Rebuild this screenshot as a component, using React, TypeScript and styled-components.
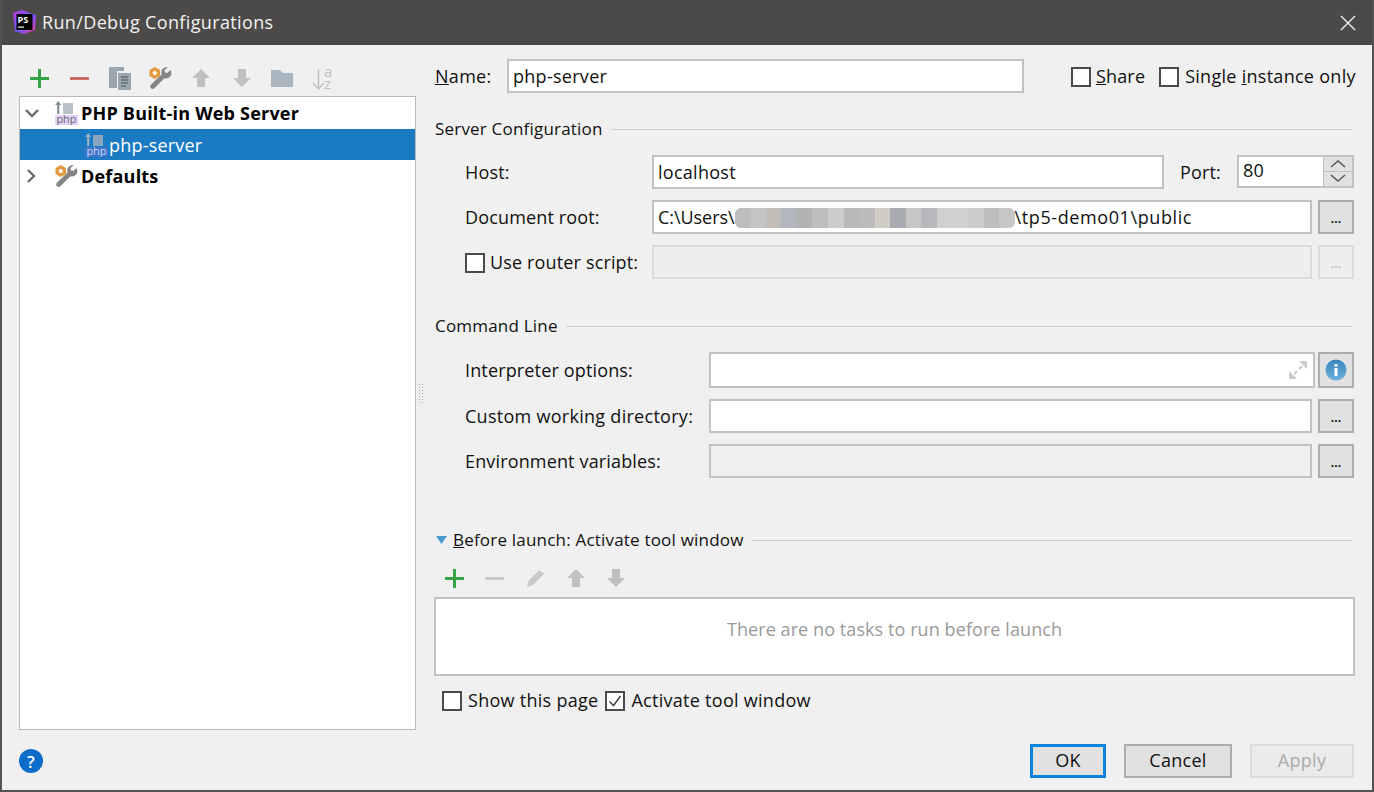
import styled, { createGlobalStyle } from 'styled-components'
import { ReactNode } from 'react'

const GlobalStyle = createGlobalStyle`
  html, body {
    margin: 0;
    padding: 0;
    background: #f0f0f0;
  }
  body {
    font-family: 'Open Sans', 'Noto Sans', sans-serif;
    font-size: 18px;
    letter-spacing: 0.28px;
    color: #111;
  }
  * { box-sizing: border-box; }
`

const Window = styled.div`
  width: 1374px;
  height: 792px;
  display: flex;
  flex-direction: column;
  background: #f0f0f0;
  border: 2px solid #555351;
  border-top: none;
  overflow: hidden;
`

const TitleBar = styled.div`
  height: 45px;
  flex: none;
  background: #4c4a48;
  margin: 0 -2px;
  padding: 0 2px 0 12px;
  display: flex;
  align-items: center;
  gap: 5px;
  color: #f2f2f2;
  font-size: 18px;
  letter-spacing: 0.36px;
`

const TitleText = styled.span`
  flex: 1;
  margin-top: -2px;
`

const CloseButton = styled.div`
  width: 18px;
  height: 18px;
  margin-right: 15px;
  display: flex;
`

const Body = styled.div`
  flex: 1;
  display: flex;
  padding-left: 17px;
  min-height: 0;
`

const LeftPane = styled.div`
  width: 397px;
  flex: none;
  display: flex;
  flex-direction: column;
  padding-top: 15px;
  height: 685px;
`

const Toolbar = styled.div`
  height: 36px;
  flex: none;
  display: flex;
  align-items: center;
`

const TasksToolbar = styled(Toolbar)`
  margin: 10px 0 0 -1px;
`

const IconSlot = styled.div`
  width: 40.5px;
  flex: none;
  display: flex;
  justify-content: center;
`

const Tree = styled.div`
  flex: 1;
  background: #fff;
  border: 1px solid #b9b9b9;
`

const TreeRow = styled.div<{ $selected?: boolean; $indent?: number; $h: number }>`
  height: ${(p) => p.$h}px;
  display: flex;
  align-items: center;
  padding-left: ${(p) => p.$indent ?? 0}px;
  background: ${(p) => (p.$selected ? '#1a7bc3' : 'transparent')};
  color: ${(p) => (p.$selected ? '#fff' : '#000')};
`

const TreeLabel = styled.span<{ $bold?: boolean }>`
  font-weight: ${(p) => (p.$bold ? 700 : 400)};
  margin-left: ${(p) => (p.$bold ? 3 : 1)}px;
  margin-top: ${(p) => (p.$bold ? -1 : 0)}px;
  letter-spacing: 0.2px;
`

const Arrow = styled.div`
  width: 24px;
  margin-right: 11px;
  display: flex;
  justify-content: center;
`

const Splitter = styled.div`
  width: 19px;
  flex: none;
  height: 685px;
  padding: 338px 0 0 1px;
  display: flex;
  flex-direction: column;
`

const Grip = styled.div`
  width: 6px;
  height: 22px;
  margin-left: 1px;
  background-image: radial-gradient(#a9a9a9 0.7px, transparent 0.9px);
  background-size: 3px 3px;
`

const RightPane = styled.div`
  width: 919px;
  flex: none;
  padding: 14px 0 0;
`

const Row = styled.div<{ $mt?: number; $pl?: number }>`
  display: flex;
  align-items: center;
  margin-top: ${(p) => p.$mt ?? 0}px;
  padding-left: ${(p) => p.$pl ?? 0}px;
`

const Label = styled.label<{ $w?: number; $ls?: number }>`
  width: ${(p) => (p.$w ? `${p.$w}px` : 'auto')};
  flex: none;
  display: flex;
  align-items: center;
  white-space: pre;
  letter-spacing: ${(p) => p.$ls ?? 0.15}px;
`

const Field = styled.div<{ $w?: number; $disabled?: boolean; $muted?: boolean; $h?: number }>`
  ${(p) => (p.$w ? `width: ${p.$w}px; flex: none;` : 'flex: 1;')}
  height: ${(p) => p.$h ?? 34}px;
  padding: 0 4px;
  background: ${(p) => (p.$disabled ? '#eeeeee' : p.$muted ? '#f0f0f0' : '#fff')};
  border: 2px solid ${(p) => (p.$disabled ? '#dcdcdc' : '#c2c2c2')};
  display: flex;
  align-items: center;
  white-space: nowrap;
  min-width: 0;
`

const PathPart = styled.span<{ $ls: number }>`
  letter-spacing: ${(p) => p.$ls}px;
`

const Spacer = styled.div<{ $w?: number }>`
  ${(p) => (p.$w ? `width: ${p.$w}px; flex: none;` : 'flex: 1;')}
`

const Expand = styled.div`
  margin-left: auto;
  margin-right: 2px;
  display: flex;
`

const SideButton = styled.div<{ $disabled?: boolean; $h?: number }>`
  width: 36px;
  height: ${(p) => p.$h ?? 34}px;
  flex: none;
  margin-left: 6px;
  background: ${(p) => (p.$disabled ? '#eeeeee' : '#e1e1e1')};
  border: 2px solid ${(p) => (p.$disabled ? '#dcdcdc' : '#adadad')};
  color: ${(p) => (p.$disabled ? '#bbb' : '#111')};
  display: flex;
  align-items: center;
  justify-content: center;
  font-weight: 700;
  font-size: 12px;
  letter-spacing: 0;
  padding-top: 3px;
`

const InfoButton = styled(SideButton)`
  margin-left: 3px;
  padding-top: 0;
`

const Header = styled.div<{ $mt: number }>`
  height: 20px;
  margin-top: ${(p) => p.$mt}px;
  display: flex;
  align-items: center;
  gap: 8px;
  font-size: 17px;
  letter-spacing: 0.2px;
  padding-right: 2px;
`

const HeaderText = styled.span`
  margin-top: -2px;
  white-space: pre;
`

const HeaderRule = styled.div`
  flex: 1;
  height: 1px;
  background: #cfcfcf;
`

const Triangle = styled.svg`
  margin: 0 -2px 0 1px;
`

const Box = styled.span<{ $mr?: number }>`
  width: 20px;
  height: 20px;
  flex: none;
  margin: 2px ${(p) => p.$mr ?? 5}px 0 0;
  background: #fff;
  border: 2px solid #4a4a4a;
  display: inline-flex;
  align-items: center;
  justify-content: center;
`

const Spinner = styled.div`
  width: 117px;
  height: 33px;
  flex: none;
  margin-top: -2px;
  background: #fff;
  border: 2px solid #c2c2c2;
  display: flex;
  padding-left: 4px;
  align-items: center;
`

const SpinText = styled.span`
  flex: 1;
  margin-top: -3px;
`

const SpinButtons = styled.div`
  width: 29px;
  height: 100%;
  display: flex;
  flex-direction: column;
  background: #e1e1e1;
  border-left: 1px solid #c2c2c2;
`

const SpinButton = styled.div<{ $top?: boolean }>`
  flex: 1;
  display: flex;
  align-items: center;
  justify-content: center;
  border-bottom: ${(p) => (p.$top ? '1px solid #c2c2c2' : 'none')};
`

const Blur = styled.div`
  display: flex;
  width: 280px;
  height: 20px;
  margin-top: 1px;
  border-radius: 6px;
  overflow: hidden;
  filter: blur(0.6px);
`

const BlurCell = styled.div<{ $c: string }>`
  flex: 1;
  background: ${(p) => p.$c};
`

const TaskBox = styled.div`
  height: 79px;
  margin: 1px -1px 0;
  padding-bottom: 15px;
  background: #fff;
  border: 2px solid #c2c2c2;
  display: flex;
  align-items: center;
  justify-content: center;
  color: #9a9a9a;
  letter-spacing: 0.08px;
`

const Footer = styled.div`
  flex: none;
  height: 60px;
  padding: 14px 18px 0 17px;
  display: flex;
  align-items: flex-start;
`

const HelpIcon = styled.div`
  width: 24px;
  height: 24px;
  margin-top: 5px;
  border-radius: 50%;
  background: #0b6cc9;
  color: #fff;
  font-size: 17px;
  font-weight: 600;
  display: flex;
  align-items: center;
  justify-content: center;
`

const DialogButton = styled.div<{ $w: number; $variant?: 'default' | 'disabled'; $ml: number }>`
  width: ${(p) => p.$w}px;
  height: 34px;
  margin-left: ${(p) => p.$ml}px;
  padding-bottom: 2px;
  display: flex;
  align-items: center;
  justify-content: center;
  background: ${(p) => (p.$variant === 'disabled' ? '#ebebeb' : '#e1e1e1')};
  border: ${(p) =>
    p.$variant === 'default'
      ? '3px solid #0a84e3'
      : p.$variant === 'disabled'
        ? '2px solid #dcdcdc'
        : '2px solid #adadad'};
  color: ${(p) => (p.$variant === 'disabled' ? '#aaa' : '#111')};
`

const SortSvg = styled.svg`
  overflow: visible;
`

const PsLogo = () => (
  <svg width="25" height="25" viewBox="0 0 25 25">
    <defs>
      <linearGradient id="psg" x1="0" y1="0" x2="1" y2="1">
        <stop offset="0" stopColor="#c03bd8" />
        <stop offset="0.55" stopColor="#6b57ff" />
        <stop offset="1" stopColor="#ff318c" />
      </linearGradient>
    </defs>
    <polygon points="1,3 10,0 24,5 23,20 12,24 3,21" fill="url(#psg)" />
    <rect x="4.5" y="4" width="16" height="16" fill="#000" />
    <text x="5.5" y="13" fontSize="9" fontWeight="700" fill="#fff" fontFamily="Open Sans" letterSpacing="0">PS</text>
    <rect x="6" y="16.5" width="6" height="1.2" fill="#fff" />
  </svg>
)

const Plus = () => (
  <svg width="19" height="19" viewBox="0 0 19 19">
    <path d="M0 9.5h19M9.5 0v19" stroke="#37a349" strokeWidth="3" />
  </svg>
)

const Minus = ({ color }: { color: string }) => (
  <svg width="19" height="19" viewBox="0 0 19 19">
    <path d="M0 9.5h19" stroke={color} strokeWidth="2.6" />
  </svg>
)

const Copy = () => (
  <svg width="22" height="23" viewBox="0 0 22 23">
    <path d="M0 0h15v4H8v17H0z" fill="#9aa7b0" />
    <rect x="9" y="6" width="13" height="17" fill="#9aa7b0" />
    <path d="M12 10h7M12 13h7M12 16h7M12 19h5" stroke="#4a5357" strokeWidth="1.2" />
  </svg>
)

const Wrench = () => (
  <svg width="23" height="23" viewBox="0 0 24 24">
    <path d="M22.5 3.2l-3.6 3-2.3-.7-.4-2.4 3.4-2.6c-3-.8-6.3 1-6.8 4.2-.2 1.1 0 2.2.3 3L2 18.6c-1 1-1 2.6 0 3.6s2.6 1 3.6 0l10.2-10.3c3.5.9 7-1.2 7.5-4.6.1-1.4-.2-3-.8-4.1z" fill="#858585" />
    <path d="M6 0l5.5 3v6.4L6 12.6.5 9.4V3z" fill="#e39a3e" />
    <circle cx="6" cy="6.3" r="2.2" fill="#fff" />
  </svg>
)

const UpArrow = () => (
  <svg width="18" height="18" viewBox="0 0 18 18">
    <path d="M9 0l9 9h-5v9H5V9H0z" fill="#c0c0c0" />
  </svg>
)

const DownArrow = () => (
  <svg width="18" height="18" viewBox="0 0 18 18">
    <path d="M5 0h8v9h5l-9 9-9-9h5z" fill="#c0c0c0" />
  </svg>
)

const Folder = () => (
  <svg width="22" height="17" viewBox="0 0 22 17">
    <path d="M0 0h9l3 3h10v14H0z" fill="#abb7c0" />
  </svg>
)

const SortAz = () => (
  <SortSvg width="21" height="26" viewBox="0 0 21 26">
    <path d="M6.5 4v20M1 18l5.5 6 5.5-6" fill="none" stroke="#c0c0c0" strokeWidth="1.5" />
    <text fontSize="15" fill="#c0c0c0" fontFamily="Open Sans" letterSpacing="0">
      <tspan x="12" y="11.5">a</tspan>
      <tspan x="12" y="24">z</tspan>
    </text>
  </SortSvg>
)

const Pencil = () => (
  <svg width="19" height="19" viewBox="0 0 20 20">
    <path d="M14 1l5 4L7 17l-6 2 2-7z" fill="#c8c8c8" />
  </svg>
)

const PhpIcon = ({ selected }: { selected?: boolean }) => (
  <svg width="23" height="24" viewBox="0 0 23 24">
    <path d="M3.2 0l3 4H4.3v9H2.2V4H.2z" fill={selected ? '#9fb5c6' : '#7e8e98'} />
    <rect x="8" y="2" width="10" height="11" fill={selected ? '#8aa5bd' : '#b6c1c9'} />
    <rect x="0" y="14" width="23" height="10" fill={selected ? '#3f73cc' : '#e3d2f7'} />
    <text
      x="11.5"
      y="22"
      fontSize="11"
      textAnchor="middle"
      fill={selected ? '#c9d8ee' : '#6b6b6b'}
      fontFamily="Open Sans"
      letterSpacing="0"
    >
      php
    </text>
  </svg>
)

const Chevron = ({ down }: { down?: boolean }) => (
  <svg width="16" height="16" viewBox="0 0 16 16">
    <path
      d={down ? 'M2 5l6 6 6-6' : 'M4 2l6 6-6 6'}
      fill="none"
      stroke="#6b6b6b"
      strokeWidth="2.4"
    />
  </svg>
)

const CheckBox = ({ checked, mr }: { checked?: boolean; mr?: number }) => (
  <Box $mr={mr}>
    {checked && (
      <svg width="14" height="14" viewBox="0 0 14 14">
        <path d="M1.5 7.5l4 4L12.5 2" fill="none" stroke="#444" strokeWidth="1.5" />
      </svg>
    )}
  </Box>
)

const SectionHeader = ({ mt, children }: { mt: number; children: ReactNode }) => (
  <Header $mt={mt}>
    {children}
    <HeaderRule />
  </Header>
)

const blurColors = [
  '#bdbdbd', '#c4c4c4', '#c3bdb8', '#b3b6bc', '#b2b2b2', '#bdbfbf', '#cdcdcd', '#b9b9b9',
  '#bcbcbc', '#d0ccc6', '#a8abb0', '#c6c6c4', '#b6b8bb', '#cfd1d1', '#d0d0d0', '#cdcdcd',
  '#bdbdbd', '#c6c6c6',
]

const leftTools = [
  <Plus />, <Minus color="#c9594e" />, <Copy />, <Wrench />,
  <UpArrow />, <DownArrow />, <Folder />, <SortAz />,
]

const taskTools = [<Plus />, <Minus color="#c6c6c6" />, <Pencil />, <UpArrow />, <DownArrow />]

export default function App() {
  return (
    <>
      <GlobalStyle />
      <Window>
        <TitleBar>
          <PsLogo />
          <TitleText>Run/Debug Configurations</TitleText>
          <CloseButton>
            <svg width="18" height="18" viewBox="0 0 18 18">
              <path d="M2 2l14 14M16 2L2 16" stroke="#f0f0f0" strokeWidth="1.4" />
            </svg>
          </CloseButton>
        </TitleBar>
        <Body>
          <LeftPane>
            <Toolbar>
              {leftTools.map((tool, i) => (
                <IconSlot key={i}>{tool}</IconSlot>
              ))}
            </Toolbar>
            <Tree>
              <TreeRow $h={32}>
                <Arrow>
                  <Chevron down />
                </Arrow>
                <PhpIcon />
                <TreeLabel $bold>PHP Built-in Web Server</TreeLabel>
              </TreeRow>
              <TreeRow $indent={65} $h={31} $selected>
                <PhpIcon selected />
                <TreeLabel>php-server</TreeLabel>
              </TreeRow>
              <TreeRow $h={32}>
                <Arrow>
                  <Chevron />
                </Arrow>
                <Wrench />
                <TreeLabel $bold>Defaults</TreeLabel>
              </TreeRow>
            </Tree>
          </LeftPane>
          <Splitter>
            <Grip />
          </Splitter>
          <RightPane>
            <Row>
              <Label $w={72} $ls={0.28}>
                <span>
                  <u>N</u>ame:
                </span>
              </Label>
              <Field $w={517}>php-server</Field>
              <Spacer $w={47} />
              <CheckBox />
              <Label>
                <span>
                  <u>S</u>hare
                </span>
              </Label>
              <Spacer $w={14} />
              <CheckBox mr={6} />
              <Label $ls={0.28}>
                <span>
                  Single <u>i</u>nstance only
                </span>
              </Label>
            </Row>

            <SectionHeader mt={26}>
              <HeaderText>Server Configuration</HeaderText>
            </SectionHeader>
            <Row $mt={16} $pl={30}>
              <Label $w={187}>Host:</Label>
              <Field $w={512}>localhost</Field>
              <Spacer $w={16} />
              <Label $w={57}>Port:</Label>
              <Spinner>
                <SpinText>80</SpinText>
                <SpinButtons>
                  <SpinButton $top>
                    <svg width="16" height="9" viewBox="0 0 16 9">
                      <path d="M1 8l7-6 7 6" fill="none" stroke="#555" strokeWidth="1.5" />
                    </svg>
                  </SpinButton>
                  <SpinButton>
                    <svg width="16" height="9" viewBox="0 0 16 9">
                      <path d="M1 1l7 6 7-6" fill="none" stroke="#555" strokeWidth="1.5" />
                    </svg>
                  </SpinButton>
                </SpinButtons>
              </Spinner>
            </Row>
            <Row $mt={11} $pl={30}>
              <Label $w={187}>Document root:</Label>
              <Field>
                <PathPart $ls={-0.05}>C:\Users\</PathPart>
                <Blur>
                  {blurColors.map((c, i) => (
                    <BlurCell key={i} $c={c} />
                  ))}
                </Blur>
                <PathPart $ls={0.6}>\tp5-demo01\public</PathPart>
              </Field>
              <SideButton>...</SideButton>
            </Row>
            <Row $mt={11} $pl={30}>
              <Label $w={187}>
                <CheckBox />
                Use router script:
              </Label>
              <Field $disabled />
              <SideButton $disabled>...</SideButton>
            </Row>

            <SectionHeader mt={37}>
              <HeaderText>Command Line</HeaderText>
            </SectionHeader>
            <Row $mt={16} $pl={30}>
              <Label $w={244}>Interpreter options:</Label>
              <Field $h={36}>
                <Expand>
                  <svg width="18" height="18" viewBox="0 0 18 18">
                    <path d="M10 0h8v8zM0 18v-8l8 8z" fill="#c9cccf" />
                    <path d="M13 5l-3 3M5 13l3-3" stroke="#c9cccf" strokeWidth="2" />
                  </svg>
                </Expand>
              </Field>
              <InfoButton $h={36}>
                <svg width="22" height="22" viewBox="0 0 22 22">
                  <defs>
                    <linearGradient id="info" x1="0" y1="0" x2="0" y2="1">
                      <stop offset="0" stopColor="#3a86bd" />
                      <stop offset="1" stopColor="#6fb0dc" />
                    </linearGradient>
                  </defs>
                  <circle cx="11" cy="11" r="10.5" fill="url(#info)" />
                  <rect x="9.5" y="9" width="3" height="8" fill="#fff" />
                  <rect x="9.5" y="5" width="3" height="2.6" fill="#fff" />
                </svg>
              </InfoButton>
            </Row>
            <Row $mt={11} $pl={30}>
              <Label $w={244} $ls={0.28}>Custom working directory:</Label>
              <Field />
              <SideButton>...</SideButton>
            </Row>
            <Row $mt={11} $pl={30}>
              <Label $w={244}>Environment variables:</Label>
              <Field $muted />
              <SideButton>...</SideButton>
            </Row>

            <SectionHeader mt={52}>
              <Triangle width="11" height="8" viewBox="0 0 11 8">
                <path d="M0 0h11L5.5 8z" fill="#4a9bd0" />
              </Triangle>
              <HeaderText>
                <u>B</u>efore launch: Activate tool window
              </HeaderText>
            </SectionHeader>
            <TasksToolbar>
              {taskTools.map((tool, i) => (
                <IconSlot key={i}>{tool}</IconSlot>
              ))}
            </TasksToolbar>
            <TaskBox>There are no tasks to run before launch</TaskBox>
            <Row $mt={12} $pl={7}>
              <CheckBox mr={6} />
              <Label $ls={0.28}>Show this page</Label>
              <Spacer $w={7} />
              <CheckBox checked mr={6} />
              <Label $ls={0.28}>Activate tool window</Label>
            </Row>
          </RightPane>
        </Body>
        <Footer>
          <HelpIcon>?</HelpIcon>
          <Spacer />
          <DialogButton $w={76} $variant="default" $ml={0}>
            OK
          </DialogButton>
          <DialogButton $w={108} $ml={18}>
            Cancel
          </DialogButton>
          <DialogButton $w={104} $variant="disabled" $ml={18}>
            Apply
          </DialogButton>
        </Footer>
      </Window>
    </>
  )
}
